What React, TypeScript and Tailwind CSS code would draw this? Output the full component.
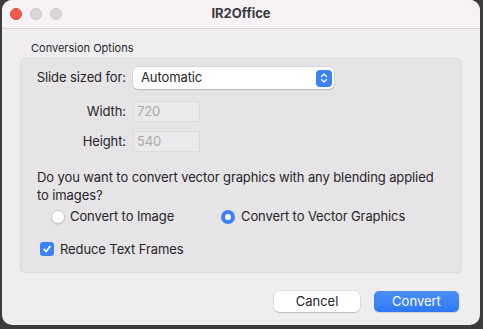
export default function App() {
  return (
    <div
      className="h-[329px] w-[483px] overflow-hidden bg-[#3b3a3c] pl-[2px]"
      style={{ fontFamily: 'Inter, "Liberation Sans", sans-serif' }}
    >
      <div className="flex h-[325px] w-[478px] flex-col overflow-hidden rounded-[10px] bg-[#efedf0]">
        {/* title bar */}
        <div className="relative flex h-[29px] shrink-0 items-center border-b border-[#d3d1d4] bg-[#f6f2f6]">
          <div className="flex gap-[8px] pl-[8px]">
            <span className="h-[12px] w-[12px] rounded-full border border-[#dc4b41] bg-[#ec5c53]" />
            <span className="h-[12px] w-[12px] rounded-full border border-[#c9c6ca] bg-[#d9d6da]" />
            <span className="h-[12px] w-[12px] rounded-full border border-[#c9c6ca] bg-[#d9d6da]" />
          </div>
          <div className="absolute inset-0 flex items-center justify-center text-[13px] font-bold text-[#3c3b3d]">
            IR2Office
          </div>
        </div>

        {/* body */}
        <div className="flex flex-1 flex-col px-[18px] pt-[12px]">
          <div className="pl-[11px] text-[11px] leading-[14px] text-[#2a292b]">Conversion Options</div>
          <div className="mt-[3px] h-[215px] rounded-[5px] border border-[#dcdadd] bg-[#e6e4e7] pl-[16px] pr-[10px] pt-[8px] text-[13px] tracking-[-0.1px] text-[#262527]">
            <div className="flex items-center">
              <span className="flex w-[89px] shrink-0 justify-end whitespace-nowrap">Slide sized for:</span>
              <div className="ml-[7px] flex h-[22px] w-[201px] items-center justify-between rounded-[5px] bg-white pl-[8px] pr-[2px] shadow-[0_0_0_0.5px_rgba(0,0,0,0.15),0_1px_1px_rgba(0,0,0,0.12)]">
                <span>Automatic</span>
                <span className="flex h-[17px] w-[16px] items-center justify-center rounded-[4px] bg-[#3b82f6]">
                  <svg width="8" height="12" viewBox="0 0 8 12" fill="none" stroke="white" strokeWidth="1.4" strokeLinecap="round" strokeLinejoin="round">
                    <path d="M1.5 4.5 L4 2 L6.5 4.5" />
                    <path d="M1.5 7.5 L4 10 L6.5 7.5" />
                  </svg>
                </span>
              </div>
            </div>

            <div className="mt-[12px] flex items-center">
              <span className="flex w-[89px] shrink-0 justify-end whitespace-nowrap">Width:</span>
              <div className="ml-[7px] flex h-[21px] w-[67px] items-center border border-[#dcdadd] bg-[#ebe9ec] pl-[3px] text-[#a9a7aa]">720</div>
            </div>
            <div className="mt-[9px] flex items-center">
              <span className="flex w-[89px] shrink-0 justify-end whitespace-nowrap">Height:</span>
              <div className="ml-[7px] flex h-[21px] w-[67px] items-center border border-[#dcdadd] bg-[#ebe9ec] pl-[3px] text-[#a9a7aa]">540</div>
            </div>

            <p className="mt-[16px] leading-[18px]">
              Do you want to convert vector graphics with any blending applied
              <br />
              to images?
            </p>

            <div className="mt-[3px] flex items-center pl-[14px]">
              <span className="h-[14px] w-[14px] rounded-full border border-[#c8c6c9] bg-white shadow-[0_1px_1px_rgba(0,0,0,0.08)]" />
              <span className="ml-[5px] w-[151px]">Convert to Image</span>
              <span className="flex h-[14px] w-[14px] items-center justify-center rounded-full bg-[#3b82f6]">
                <span className="h-[6px] w-[6px] rounded-full bg-white" />
              </span>
              <span className="ml-[6px]">Convert to Vector Graphics</span>
            </div>

            <div className="mt-[13px] flex items-center pl-[3px]">
              <span className="flex h-[14px] w-[14px] items-center justify-center rounded-[3px] bg-[#3b82f6]">
                <svg width="10" height="10" viewBox="0 0 10 10" fill="none" stroke="white" strokeWidth="1.7" strokeLinecap="round" strokeLinejoin="round">
                  <path d="M2 5.3 L4.1 7.6 L8 2.4" />
                </svg>
              </span>
              <span className="ml-[6px]">Reduce Text Frames</span>
            </div>
          </div>

          <div className="mt-[18px] flex justify-end gap-[14px] pr-[3px] text-[13px]">
            <button className="flex h-[21px] w-[86px] items-center justify-center rounded-[5px] bg-white text-[#262527] shadow-[0_0_0_0.5px_rgba(0,0,0,0.15),0_1px_1px_rgba(0,0,0,0.12)]">
              Cancel
            </button>
            <button className="flex h-[21px] w-[85px] items-center justify-center rounded-[5px] bg-gradient-to-b from-[#4b8ff8] to-[#2f78f2] text-white shadow-[0_1px_1px_rgba(0,0,0,0.12)]">
              Convert
            </button>
          </div>
        </div>
      </div>
    </div>
  );
}
